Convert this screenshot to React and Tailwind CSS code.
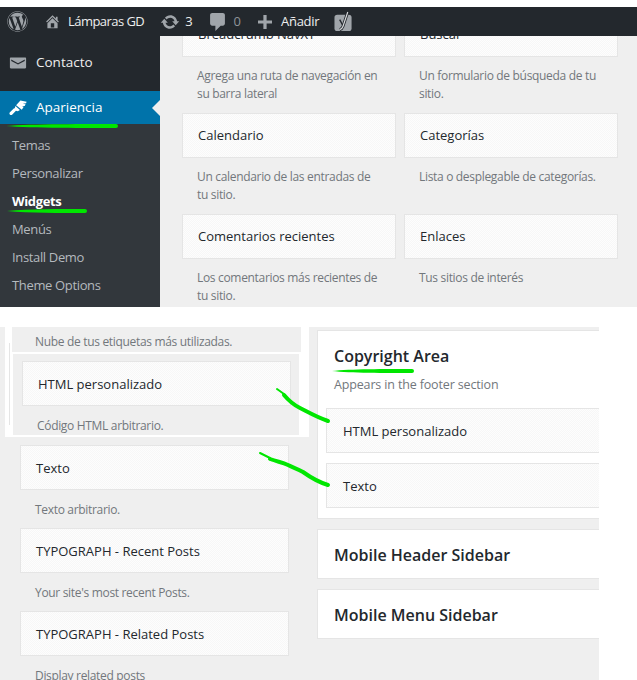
import React from 'react';
import { FaWordpress } from 'react-icons/fa';

const font = { fontFamily: '"Open Sans", sans-serif' };

function Card({ title, className = '' }) {
    return (
        <div className={`h-[45px] flex items-center pl-[15px] bg-[repeating-conic-gradient(#f7f7f7_0_25%,#fdfdfd_0_50%)] bg-[length:2px_2px] border border-[#e5e5e5] text-[13px] font-medium text-[#23282d] whitespace-nowrap overflow-hidden ${className}`}>
            {title}
        </div>
    );
}

function Desc({ children, className = '' }) {
    return <p className={`text-[12px] leading-[18px] tracking-[-0.32px] text-[#72777c] ${className}`}>{children}</p>;
}

function BarItem({ icon, children, className = '' }) {
    return (
        <div className={`flex items-center ${className}`}>
            {icon}
            <span>{children}</span>
        </div>
    );
}

function AdminBar() {
    return (
        <div className="h-[29px] bg-[#23282d] flex items-center text-[13px] text-[#eeeeee] pl-[7px]">
            <FaWordpress className="text-[21px] text-[#9ea3a8] mr-[16px]" />
            <BarItem className="mr-[16px] gap-[7px] tracking-[-0.55px]" icon={
                <svg viewBox="0 0 20 20" className="w-[17px] h-[17px] fill-[#a0a5aa]">
                    <path d="M16 8.500l1.530 1.530-1.060 1.060L10 4.620l-6.470 6.470-1.060-1.060L10 2.500l4 4v-2h2v4zm-6-2.460l6 5.990V18H4v-5.970zM12 17v-5H8v5h4z" />
                </svg>
            }>Lámparas GD</BarItem>
            <BarItem className="mr-[17px] gap-[5px]" icon={
                <svg viewBox="0 0 20 20" className="w-[20px] h-[20px] fill-[#a0a5aa]">
                    <path d="M10.200 3.280c3.530 0 6.430 2.610 6.920 6h2.080l-3.500 4-3.500-4h2.320c-.450-1.970-2.210-3.450-4.320-3.450-1.450 0-2.730.710-3.540 1.780L4.950 5.660C6.230 4.200 8.110 3.280 10.200 3.280zm-.400 13.440c-3.520 0-6.430-2.610-6.920-6H.800l3.500-4c1.170 1.330 2.330 2.670 3.500 4H5.480c.450 1.970 2.210 3.450 4.320 3.450 1.450 0 2.730-.710 3.540-1.780l1.710 1.950c-1.280 1.460-3.150 2.380-5.250 2.380z" />
                </svg>
            }>3</BarItem>
            <BarItem className="mr-[17px] gap-[9px] text-[#8f9499]" icon={
                <svg viewBox="3 2 14 17" className="w-[15px] h-[18px] fill-[#a0a5aa]">
                    <path d="M5 2h10c1.100 0 2 .900 2 2v8c0 1.100-.900 2-2 2h-2l-5 5v-5H5c-1.100 0-2-.900-2-2V4c0-1.100.900-2 2-2z" />
                </svg>
            }>0</BarItem>
            <BarItem className="mr-[15px] gap-[9px] tracking-[-0.3px]" icon={
                <svg viewBox="4 2 13 13" className="w-[14px] h-[14px] fill-[#a0a5aa]">
                    <path d="M17 7v3h-5v5H9v-5H4V7h5V2h3v5h5z" />
                </svg>
            }>Añadir</BarItem>
            <svg viewBox="0 0 20 22" className="w-[19px] h-[21px]">
                <rect x="0.500" y="4" width="18" height="17" rx="3" fill="#a0a5aa" />
                <path d="M6 9l3.500 6.500" stroke="#23282d" strokeWidth="1.500" fill="none" />
                <path d="M14.500 1L9.500 16c-.500 1.500-1.500 3-3.500 3.500" stroke="#23282d" strokeWidth="3" fill="none" />
                <path d="M14.500 1L9.500 16c-.500 1.500-1.500 3-3.500 3.500" stroke="#d8dadc" strokeWidth="1.200" fill="none" />
            </svg>
        </div>
    );
}

function Sidebar() {
    return (
        <div className="w-[160px] shrink-0 bg-[#23282d] text-[13px] flex flex-col">
            <div className="h-[52px] pt-[1px] flex items-center pl-[9px] gap-[9px] text-[13.500px] text-[#eeeeee]">
                <svg viewBox="0 0 20 20" className="w-[18px] h-[18px] fill-[#a0a5aa]">
                    <path d="M2 4h16c.500 0 1 .500 1 1v10c0 .500-.500 1-1 1H2c-.500 0-1-.500-1-1V5c0-.500.500-1 1-1zm.500 2.200v1.500L10 11.800l7.500-4.100V6.200L10 10.200z" />
                </svg>
                Contacto
            </div>
            <div className="h-[3px]" />
            <div className="relative h-[33px] bg-[#0073aa] flex items-center pl-[9px] gap-[8px] text-white text-[13.500px]">
                <svg viewBox="0 0 20 20" className="w-[19px] h-[19px] fill-white">
                    <path d="M7.500 7.500L12 2.500l6.500 1.500-.500 1.500-3.500.500 3 .500-1 2-3-.200 2 1-2 3z" />
                    <path d="M6.800 8.500l4.700 4.200-2.200 1.200-2-.500-3.800 3.900c-.800.800-2 .700-2.600 0-.600-.700-.600-1.700.100-2.400L5 11.100l1-.300z" />
                </svg>
                Apariencia
                <div className="absolute right-0 top-[9px] w-0 h-0 border-y-[8px] border-y-transparent border-r-[8px] border-r-[#efefef]" />
            </div>
            <div className="flex-1 bg-[#32373c] pt-[7px] text-[#b4b9be] text-[13px] tracking-[-0.35px] leading-[28px] pl-[12px]">
                <div>Temas</div>
                <div>Personalizar</div>
                <div className="text-white font-bold">Widgets</div>
                <div>Menús</div>
                <div>Install Demo</div>
                <div>Theme Options</div>
            </div>
        </div>
    );
}

const topWidgets = [
    ['Breadcrumb NavXT', 'Agrega una ruta de navegación en su barra lateral', 'Buscar', 'Un formulario de búsqueda de tu sitio.'],
    ['Calendario', 'Un calendario de las entradas de tu sitio.', 'Categorías', 'Lista o desplegable de categorías.'],
    ['Comentarios recientes', 'Los comentarios más recientes de tu sitio.', 'Enlaces', 'Tus sitios de interés'],
];

function TopSection() {
    return (
        <div className="flex h-[271px] bg-[#efefef]">
            <Sidebar />
            <div className="flex-1 overflow-hidden pl-[22px]">
                <div className="grid grid-cols-[214px_214px] gap-x-[8px] -mt-[24px] auto-rows-[101px]">
                    {topWidgets.map((row) => (
                        <React.Fragment key={row[0]}>
                            <div>
                                <Card title={row[0]} />
                                <Desc className="pl-[15px] pr-[14px] pt-[10px]">{row[1]}</Desc>
                            </div>
                            <div>
                                <Card title={row[2]} />
                                <Desc className="pl-[15px] pr-[14px] pt-[10px]">{row[3]}</Desc>
                            </div>
                        </React.Fragment>
                    ))}
                </div>
            </div>
        </div>
    );
}

function LeftColumn() {
    return (
        <div className="w-[317px] shrink-0">
            {/* pasted highlight block */}
            <div className="relative ml-[5px] w-[304px] h-[110px] bg-white">
                <div className="ml-[7px] w-[289px] h-[25px] bg-[#efefef] pl-[23px] pt-[6px]">
                    <Desc>Nube de tus etiquetas más utilizadas.</Desc>
                </div>
                <div className="absolute left-[4px] top-[16px] w-px h-[82px] bg-[#e5e5e5]" />
                <div className="ml-[8px] mt-[2px] w-[286px] h-[81px] bg-[#efefef] pt-[7px] pl-[9px]">
                    <Card title="HTML personalizado" className="w-[269px] pt-[2px]" />
                    <Desc className="pl-[15px] pt-[11px]">Código HTML arbitrario.</Desc>
                </div>
            </div>
            <div className="pl-[20px] pt-[8px]">
                <Card title="Texto" className="w-[269px] pt-[2px]" />
                <Desc className="pl-[15px] pt-[11px] h-[38px]">Texto arbitrario.</Desc>
                <Card title="TYPOGRAPH - Recent Posts" className="w-[269px] pt-[2px]" />
                <Desc className="pl-[15px] pt-[11px] h-[38px]">Your site's most recent Posts.</Desc>
                <Card title="TYPOGRAPH - Related Posts" className="w-[269px] pt-[2px]" />
                <Desc className="pl-[15px] pt-[11px]">Display related posts</Desc>
            </div>
        </div>
    );
}

function RightColumn() {
    return (
        <div className="flex-1 min-w-0 pt-[3px]">
            <div className="h-[189px] bg-white border border-[#e5e5e5] border-r-0 pl-[16px] pt-[13px]">
                <h3 className="text-[16px] leading-[24px] font-semibold text-[#23282d]">Copyright Area</h3>
                <p className="text-[12.500px] leading-[18px] tracking-[-0.15px] text-[#72777c] mt-[8px]">Appears in the footer section</p>
                <div className="-ml-[8px] mt-[14px] flex flex-col gap-[10px]">
                    <Card title="HTML personalizado" className="border-r-0 pl-[16px] pt-[2px]" />
                    <Card title="Texto" className="border-r-0 pl-[16px] pt-[2px]" />
                </div>
            </div>
            <div className="mt-[10px] h-[50px] pt-[2px] bg-white border border-[#e5e5e5] border-r-0 pl-[16px] flex items-center text-[16px] font-semibold text-[#23282d]">Mobile Header Sidebar</div>
            <div className="mt-[10px] h-[50px] pt-[2px] bg-white border border-[#e5e5e5] border-r-0 pl-[16px] flex items-center text-[16px] font-semibold text-[#23282d]">Mobile Menu Sidebar</div>
        </div>
    );
}

// green marker strokes drawn on top of the screenshot
function Marks() {
    const underlines = [
        'M6 126C30 124 90 124 116 124a2 2 0 0 1 0 4C90 128 30 128 6 126Z',
        'M7 211C30 209 60 209 85 209a2 2 0 0 1 0 4C60 213 30 213 7 211Z',
        'M332 371C350 369 385 369 412 369a2 2 0 0 1 0 4C385 373 350 373 332 371Z',
    ];
    const thin = ['M277 389L284 394', 'M260 453L270 458'];
    const thick = [
        'M284 395C289 401 294 405 300 408C308 412 316 417 328 421',
        'M270 459C278 462 282 462 288 465C294 468 298 469 303 472C310 477 318 482 328 485',
    ];
    return (
        <svg className="absolute left-0 top-0 pointer-events-none" width="637" height="680" fill="none">
            {underlines.map((d) => (
                <path key={d} d={d} fill="#00e600" />
            ))}
            {thin.map((d) => (
                <path key={d} d={d} stroke="#00e600" strokeWidth="2" strokeLinecap="round" />
            ))}
            {thick.map((d) => (
                <path key={d} d={d} stroke="#00e600" strokeWidth="4" strokeLinecap="round" />
            ))}
        </svg>
    );
}

export default function App() {
    return (
        <div className="relative w-[637px] h-[680px] bg-white overflow-hidden" style={font}>
            <div className="h-[7px]" />
            <AdminBar />
            <TopSection />
            <div className="h-[20px]" />
            <div className="flex w-[599px] h-[353px] bg-[#efefef]">
                <LeftColumn />
                <RightColumn />
            </div>
            <Marks />
        </div>
    );
}
